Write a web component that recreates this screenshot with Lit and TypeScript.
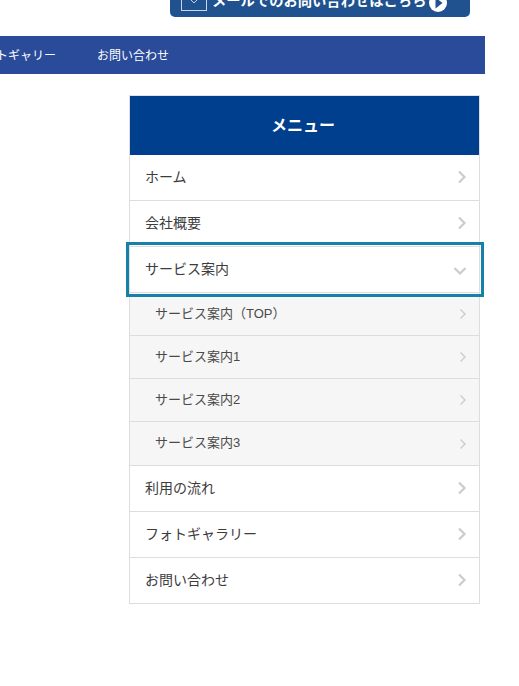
import { LitElement, html, css, svg } from "lit";
import { customElement } from "lit/decorators.js";

const right = svg`<svg class="ch" width="10" height="14" viewBox="0 0 10 14"><path d="M2 1.5 L7.5 7 L2 12.5" fill="none" stroke="#cccccc" stroke-width="2.2"/></svg>`;
const rightSmall = svg`<svg class="ch small" width="8" height="12" viewBox="0 0 8 12"><path d="M1.5 1.5 L6 6 L1.5 10.5" fill="none" stroke="#cccccc" stroke-width="1.4"/></svg>`;
const down = svg`<svg class="ch down" width="14" height="10" viewBox="0 0 14 10"><path d="M1.5 2 L7 7.5 L12.5 2" fill="none" stroke="#cccccc" stroke-width="2.2"/></svg>`;

@customElement("app-root")
export class AppRoot extends LitElement {
  static styles = css`
    :host {
      display: block;
      width: 519px;
      height: 686px;
      overflow: hidden;
      background: #fff;
      font-family: "Liberation Sans", "Noto Sans CJK JP", sans-serif;
      color: #333;
    }
    .top {
      display: flex;
      justify-content: flex-end;
      padding-right: 49px;
      height: 36px;
      align-items: flex-start;
    }
    .mail {
      width: 300px;
      height: 17px;
      box-sizing: border-box;
      background: #1f528f;
      border-radius: 0 0 5px 5px;
      overflow: hidden;
      display: flex;
      align-items: flex-end;
      padding: 0 22px 6px 11px;
      color: #fff;
      font-weight: 700;
      font-size: 14.3px;
      line-height: 20px;
      white-space: nowrap;
    }
    .env {
      flex: none;
      margin-right: 5px;
      display: block;
    }
    .play {
      flex: none;
      margin-left: 3px;
      margin-bottom: -1px;
      display: block;
    }
    nav {
      width: 485px;
      height: 38px;
      background: #2a4a9a;
      color: #fff;
      font-size: 12px;
      display: flex;
      justify-content: flex-end;
      align-items: center;
      gap: 41px;
      padding: 0 316px 2px 0;
      box-sizing: border-box;
      overflow: hidden;
      white-space: nowrap;
    }
    nav span { flex: none; }
    nav span:first-child { margin-right: -1px; }
    nav span:last-child { margin-left: 1px; }
    .menu {
      width: 351px;
      margin: 21px 0 0 129px;
      box-sizing: border-box;
      border: 1px solid #dddddd;
      border-top: 1px solid #e2e2e2;
      border-bottom: none;
    }
    h2 {
      margin: 0;
      height: 59px;
      box-sizing: border-box;
      padding: 0 3px 4px 0;
      background: #003f8e;
      color: #fff;
      font-size: 16px;
      font-weight: 700;
      display: flex;
      align-items: center;
      justify-content: center;
    }
    .row {
      height: 46px;
      box-sizing: border-box;
      border-bottom: 1px solid #dddddd;
      background: #fff;
      font-size: 14px;
      color: #3c3c3c;
      display: flex;
      align-items: center;
      justify-content: space-between;
      padding: 0 12px 0 15px;
    }
    .row > span { margin-bottom: 4px; }
    .row > .ch { margin-bottom: 2px; }
    .row > .ch.down { margin-bottom: 0; margin-top: 2px; }
    .row.focus { position: relative; }
    .row.focus::after {
      content: "";
      position: absolute;
      top: -5px;
      bottom: -5px;
      left: -4px;
      right: -5px;
      border: 3px solid #1580a8;
      pointer-events: none;
    }
    .sub {
      height: 43px;
      box-sizing: border-box;
      border-bottom: 1px solid #dddddd;
      background: #f6f6f6;
      font-size: 13px;
      color: #4a4a4a;
      display: flex;
      align-items: center;
      justify-content: space-between;
      padding: 0 12px 0 25px;
    }
    .sub > span { margin-bottom: 4px; }
    .sub.last { height: 44px; }
    .ch { display: block; flex: none; }
  `;

  render() {
    const mainA = ["ホーム", "会社概要"];
    const subs = ["サービス案内（TOP）", "サービス案内1", "サービス案内2", "サービス案内3"];
    const mainB = ["利用の流れ", "フォトギャラリー", "お問い合わせ"];
    return html`
      <div class="top">
        <div class="mail">
          <svg class="env" width="26" height="26" viewBox="0 0 26 26">
            <rect x="0.5" y="0.5" width="25" height="25" fill="none" stroke="#c9d6e6" />
            <path d="M8.5 13.5 L13 18 L17.5 13.5" fill="none" stroke="#c9d6e6" />
          </svg>
          <span>メールでのお問い合わせはこちら</span>
          <svg class="play" width="18" height="18" viewBox="0 0 18 18">
            <circle cx="9" cy="9" r="9" fill="#fff" />
            <path d="M6.5 3.5 L13.5 9 L6.5 14.5 Z" fill="#1f528f" />
          </svg>
        </div>
      </div>
      <nav><span>フォトギャリー</span><span>お問い合わせ</span></nav>
      <div class="menu">
        <h2>メニュー</h2>
        ${mainA.map((t) => html`<div class="row"><span>${t}</span>${right}</div>`)}
        <div class="row focus"><span>サービス案内</span>${down}</div>
        ${subs.map(
          (t, i) => html`<div class="sub ${i === 3 ? "last" : ""}"><span>${t}</span>${rightSmall}</div>`
        )}
        ${mainB.map((t) => html`<div class="row"><span>${t}</span>${right}</div>`)}
      </div>
    `;
  }
}
